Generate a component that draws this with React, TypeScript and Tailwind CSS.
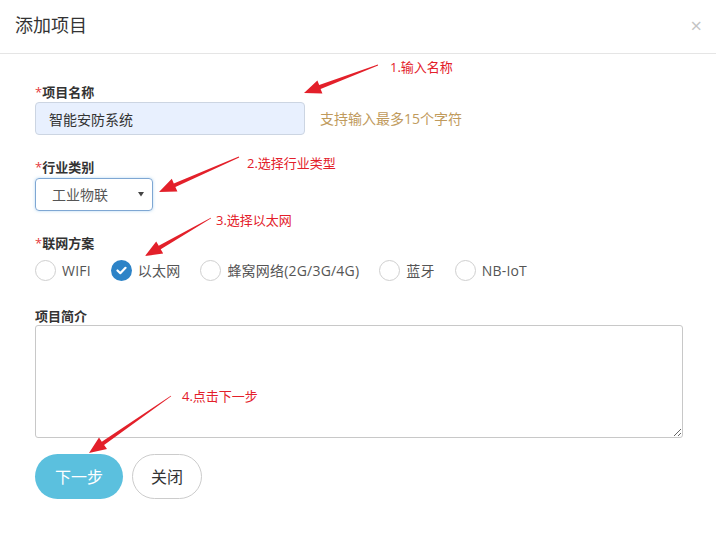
import React, { useState } from 'react';

const cjk = { fontFamily: '"Open Sans", "Noto Sans CJK SC", sans-serif' };

interface ArrowProps {
  x1: number;
  y1: number;
  x2: number;
  y2: number;
}

// red annotation arrow: thin tail widening into a head at (x2, y2)
const arrowPoints = ({ x1, y1, x2, y2 }: ArrowProps) => {
  const dx = x2 - x1;
  const dy = y2 - y1;
  const len = Math.sqrt(dx * dx + dy * dy);
  const ux = dx / len;
  const uy = dy / len;
  const nx = -uy;
  const ny = ux;
  const headLen = 17;
  const headW = 7;
  const shaftW = 2;
  const bx = x2 - ux * headLen;
  const by = y2 - uy * headLen;
  const pts = [
    [x1 + nx * 0.4, y1 + ny * 0.4],
    [bx + nx * shaftW, by + ny * shaftW],
    [bx + nx * headW, by + ny * headW],
    [x2, y2],
    [bx - nx * headW, by - ny * headW],
    [bx - nx * shaftW, by - ny * shaftW],
    [x1 - nx * 0.4, y1 - ny * 0.4],
  ];
  return pts.map((p) => p.map((v) => v.toFixed(1)).join(',')).join(' ');
};

const arrows: ArrowProps[] = [
  { x1: 378, y1: 65, x2: 304, y2: 93 },
  { x1: 239, y1: 157, x2: 159, y2: 192 },
  { x1: 211, y1: 218, x2: 145, y2: 256 },
  { x1: 171, y1: 396, x2: 89, y2: 453 },
];

const notes = [
  { text: '1.输入名称', cls: 'left-[390px] top-[57px]' },
  { text: '2.选择行业类型', cls: 'left-[247px] top-[153px]' },
  { text: '3.选择以太网', cls: 'left-[216px] top-[210px]' },
  { text: '4.点击下一步', cls: 'left-[182px] top-[386px]' },
];

const networks = ['WIFI', '以太网', '蜂窝网络(2G/3G/4G)', '蓝牙', 'NB-IoT'];

const Label: React.FC<{ text: string; required?: boolean }> = ({ text, required }) => (
  <div className="h-[18px] leading-[18px] text-[13px] font-bold text-[#333]">
    {required && <span className="text-[#e4393c] font-normal">*</span>}
    {text}
  </div>
);

const App: React.FC = () => {
  const [network, setNetwork] = useState('以太网');
  const [name, setName] = useState('智能安防系统');

  return (
    <div className="relative w-[716px] h-[547px] bg-white overflow-hidden" style={cjk}>
      <div className="h-[54px] px-[15px] flex items-center justify-between border-b border-[#e5e5e5]">
        <h1 className="text-[18px] text-[#333] font-normal -mt-[2px]">添加项目</h1>
        <span className="text-[20px] leading-none text-[#c4c4c4] -mr-[1px] -mt-[2px]">×</span>
      </div>

      <div className="pl-[35px] pr-[33px] pt-[29px]">
        <Label text="项目名称" required />
        <div className="flex items-center mt-[1px]">
          <input
            value={name}
            onChange={(e) => setName(e.target.value)}
            className="w-[270px] h-[33px] px-[13px] bg-[#e8f0fe] border border-[#ccd5e2] rounded-[4px] text-[14px] text-[#333] outline-none"
            style={cjk}
          />
          <span className="ml-[15px] text-[14px] text-[#c09a5c]">支持输入最多15个字符</span>
        </div>

        <div className="mt-[23px]">
          <Label text="行业类别" required />
        </div>
        <div className="mt-[2px] w-[118px] h-[33px] border border-[#7fa7d3] rounded-[4px] flex items-center justify-between pl-[16px] pr-[8px] shadow-[0_0_3px_rgba(102,175,233,0.5)]">
          <span className="text-[14px] text-[#555]">工业物联</span>
          <svg width="6" height="6" viewBox="0 0 6 6" className="-mt-[2px]">
            <path d="M0 1 L6 1 L3 5.5 Z" fill="#444" />
          </svg>
        </div>

        <div className="mt-[23px]">
          <Label text="联网方案" required />
        </div>
        <div className="mt-[7px] h-[22px] flex items-center">
          {networks.map((n) => {
            const checked = n === network;
            return (
              <label key={n} className="flex items-center mr-[20px] cursor-pointer" onClick={() => setNetwork(n)}>
                {checked ? (
                  <span className="w-[21px] h-[21px] rounded-full bg-[#2d83c7] flex items-center justify-center">
                    <svg width="11" height="9" viewBox="0 0 11 9">
                      <path d="M1.5 4.5 L4.3 7.2 L9.5 1.8" fill="none" stroke="white" strokeWidth="2.2" strokeLinecap="round" strokeLinejoin="round" />
                    </svg>
                  </span>
                ) : (
                  <span className="w-[21px] h-[21px] rounded-full border border-[#cfcfcf] bg-white" />
                )}
                <span className="ml-[6px] text-[14px] text-[#555] tracking-[0.2px]">{n}</span>
              </label>
            );
          })}
        </div>

        <div className="mt-[26px]">
          <Label text="项目简介" />
        </div>
        <textarea className="block w-[648px] h-[113px] border border-[#c8c8c8] rounded-[3px] outline-none resize-y" />

        <div className="mt-[16px] flex gap-[9px]">
          <button className="w-[88px] h-[45px] rounded-full bg-[#5bc0de] text-white text-[16px]">下一步</button>
          <button className="w-[70px] h-[45px] rounded-full bg-white border border-[#cccccc] text-[#333] text-[16px]">关闭</button>
        </div>
      </div>

      <svg className="absolute left-0 top-0 pointer-events-none" width="716" height="547">
        {arrows.map((a, i) => (
          <polygon key={i} points={arrowPoints(a)} fill="#e3202a" />
        ))}
      </svg>
      {notes.map((n) => (
        <span key={n.text} className={`absolute ${n.cls} text-[13px] leading-[20px] text-[#e3202a]`}>
          {n.text}
        </span>
      ))}
    </div>
  );
};

export default App;
